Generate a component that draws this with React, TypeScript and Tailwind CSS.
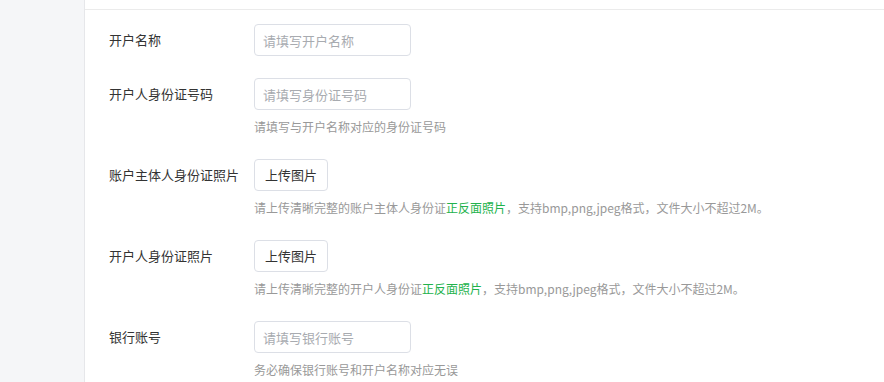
import React from "react";

const font = { fontFamily: '"Noto Sans CJK SC", "Noto Sans", sans-serif' };

function Label({ children }: { children: React.ReactNode }) {
  return (
    <div className="w-[145px] shrink-0 h-8 flex items-center text-[13px] text-[#333]">
      {children}
    </div>
  );
}

function Input({ placeholder }: { placeholder: string }) {
  return (
    <input
      placeholder={placeholder}
      className="w-[157px] h-8 px-[8px] border border-[#dcdfe6] rounded-[4px] text-[13px] text-[#333] placeholder:text-[#a8abb0] outline-none bg-white"
      style={font}
    />
  );
}

function UploadBtn() {
  return (
    <button
      className="w-[74px] h-8 border border-[#dcdfe6] rounded-[4px] text-[13px] text-[#333] bg-white flex items-center justify-center"
      style={font}
    >
      上传图片
    </button>
  );
}

function Help({ children }: { children: React.ReactNode }) {
  return <div className="pt-[7px] leading-[20px] text-[12px] text-[#999]">{children}</div>;
}

function Row({ label, children }: { label: string; children: React.ReactNode }) {
  return (
    <div className="flex mb-[22px]">
      <Label>{label}</Label>
      <div className="flex flex-col">{children}</div>
    </div>
  );
}

export default function App() {
  return (
    <div className="flex w-[884px] h-[382px] overflow-hidden bg-white" style={font}>
      <div className="w-[85px] shrink-0 bg-[#f5f6f8] border-r border-[#e6e7ea]" />
      <div className="flex-1 flex flex-col">
        <div className="h-[10px] border-b border-[#ebebeb] shrink-0" />
        <div className="pl-[24px] pt-[14px]">
          <Row label="开户名称">
            <Input placeholder="请填写开户名称" />
          </Row>
          <Row label="开户人身份证号码">
            <Input placeholder="请填写身份证号码" />
            <Help>请填写与开户名称对应的身份证号码</Help>
          </Row>
          <Row label="账户主体人身份证照片">
            <UploadBtn />
            <Help>
              请上传清晰完整的账户主体人身份证<span className="text-[#22b24c]">正反面照片</span>，支持bmp,png,jpeg格式，文件大小不超过2M。
            </Help>
          </Row>
          <Row label="开户人身份证照片">
            <UploadBtn />
            <Help>
              请上传清晰完整的开户人身份证<span className="text-[#22b24c]">正反面照片</span>，支持bmp,png,jpeg格式，文件大小不超过2M。
            </Help>
          </Row>
          <Row label="银行账号">
            <Input placeholder="请填写银行账号" />
            <Help>务必确保银行账号和开户名称对应无误</Help>
          </Row>
        </div>
      </div>
    </div>
  );
}
